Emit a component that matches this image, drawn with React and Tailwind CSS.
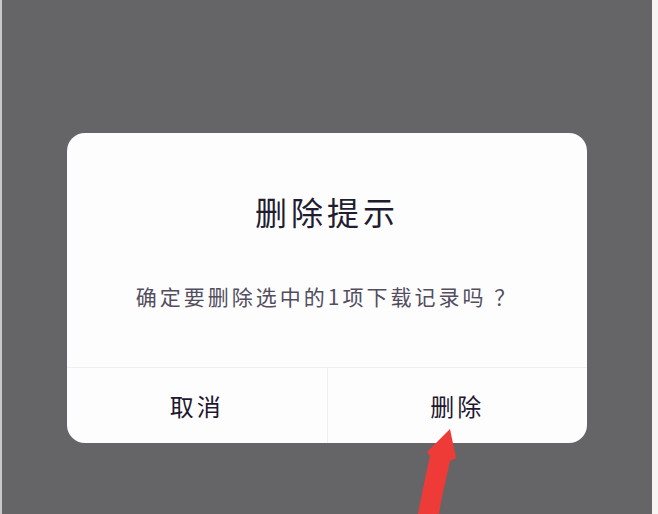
import React from "react";

function Arrow() {
  return (
    <svg
      className="pointer-events-none absolute inset-0"
      width="658"
      height="514"
      viewBox="0 0 658 514"
    >
      <path
        d="M450,429 L456,458 L450,461 C446,480 441,498 439,514 L418,514 C422,494 426,474 430,456 L427,452 Z"
        fill="#ef3b38"
      />
    </svg>
  );
}

export default function App() {
  const cjk = { fontFamily: '"Noto Sans CJK SC", "Noto Sans", sans-serif' };

  return (
    <div className="relative flex h-[514px] w-[658px] overflow-hidden" style={cjk}>
      <div className="w-[2px] bg-[#c9c9c9]" />
      <div className="flex flex-1 justify-center bg-[#656567] pt-[133px]">
        <div className="flex h-[310px] w-[520px] flex-col overflow-hidden rounded-[18px] bg-[#fdfdfe]">
          <div className="pt-[60px] text-center text-[32px] leading-[36px] tracking-[4px] text-[#221c30]">
            删除提示
          </div>
          <div className="mt-[52px] text-center text-[21px] leading-[30px] tracking-[3px] text-[#534d5e]">
            确定要删除选中的1项下载记录吗 ？
          </div>
          <div className="mt-[56px] flex flex-1 border-t border-[#efeff2]">
            <button className="flex flex-1 items-center justify-center text-[24px] tracking-[3px] text-[#1e1830]">
              取消
            </button>
            <div className="w-px bg-[#efeff2]" />
            <button className="flex flex-1 items-center justify-center text-[24px] tracking-[3px] text-[#1e1830]">
              删除
            </button>
          </div>
        </div>
      </div>
      <div className="w-[6px] bg-[#f7f5f3]" />
      <Arrow />
    </div>
  );
}
